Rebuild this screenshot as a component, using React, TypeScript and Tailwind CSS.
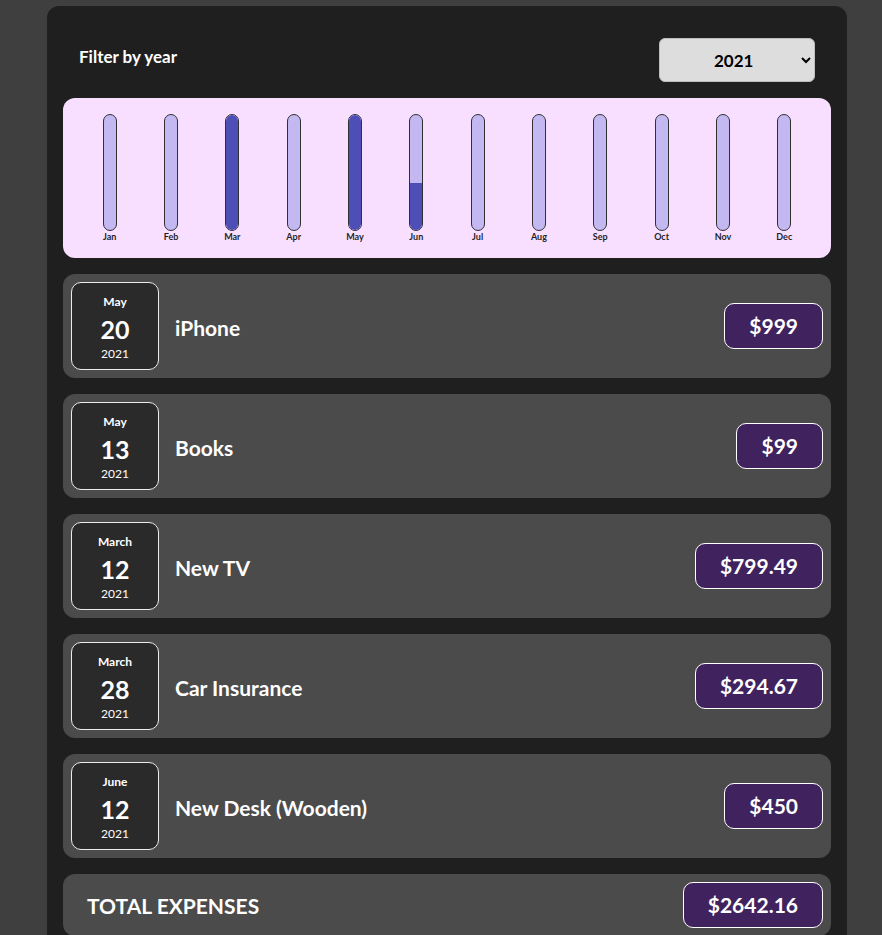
import { useState } from "react";

type Expense = {
  id: string;
  title: string;
  amount: number;
  date: Date;
};

const EXPENSES: Expense[] = [
  { id: "e1", title: "iPhone", amount: 999, date: new Date(2021, 4, 20) },
  { id: "e2", title: "Books", amount: 99, date: new Date(2021, 4, 13) },
  { id: "e3", title: "New TV", amount: 799.49, date: new Date(2021, 2, 12) },
  { id: "e4", title: "Car Insurance", amount: 294.67, date: new Date(2021, 2, 28) },
  { id: "e5", title: "New Desk (Wooden)", amount: 450, date: new Date(2021, 5, 12) },
];

const MONTHS = ["Jan", "Feb", "Mar", "Apr", "May", "Jun", "Jul", "Aug", "Sep", "Oct", "Nov", "Dec"];

function ChartBar({ label, value, max }: { label: string; value: number; max: number }) {
  const fill = max > 0 ? Math.round((value / max) * 100) + "%" : "0%";
  return (
    <div className="flex flex-1 flex-col items-center">
      <div className="flex h-[117px] w-[14px] flex-col justify-end overflow-hidden rounded-full border border-[#313131] bg-[#c3b8f1]">
        <div className="w-full bg-[#4e4fb6]" style={{ height: fill }} />
      </div>
      <span className="text-[9px] font-bold leading-[12px] text-[#1f1f1f]">{label}</span>
    </div>
  );
}

function ExpenseDate({ date }: { date: Date }) {
  const month = date.toLocaleString("en-US", { month: "long" });
  const day = date.toLocaleString("en-US", { day: "2-digit" });
  const year = date.getFullYear();
  return (
    <div className="flex h-[88px] w-[88px] shrink-0 flex-col items-center justify-center rounded-[10px] border border-[#ececec] bg-[#2a2a2a] pt-[4px] text-white">
      <span className="mb-[4px] text-[12px] font-bold leading-[16px]">{month}</span>
      <span className="text-[25px] font-bold leading-[30px]">{day}</span>
      <span className="mt-[2px] text-[12px] leading-[16px]">{year}</span>
    </div>
  );
}

function Price({ amount }: { amount: string }) {
  return (
    <div className="rounded-[10px] border border-white bg-[#40235e] px-[24px] py-[8px] text-[21px] font-bold leading-[28px] text-white">
      ${amount}
    </div>
  );
}

export default function App() {
  const [year, setYear] = useState("2021");
  const filtered = EXPENSES.filter((e) => e.date.getFullYear().toString() === year);

  const monthly = MONTHS.map((_, i) =>
    filtered.filter((e) => e.date.getMonth() === i).reduce((s, e) => s + e.amount, 0)
  );
  const max = Math.max(...monthly);
  const total = filtered.reduce((s, e) => s + e.amount, 0);

  return (
    <div
      className="min-h-[935px] bg-[#3f3f3f] pl-[47px] pt-[6px]"
      style={{ fontFamily: "Lato, 'Noto Sans', sans-serif" }}
    >
      <div className="w-[800px] rounded-t-[12px] bg-[#1f1f1f] px-4 pt-4">
        {/* FILTER */}
        <div className="flex items-center justify-between p-4">
          <label className="mb-[6px] text-[17px] font-bold text-white">Filter by year</label>
          <select
            value={year}
            onChange={(e) => setYear(e.target.value)}
            className="h-[44px] w-[156px] rounded-[6px] border border-[#bdbdbd] bg-[#dddddd] pl-[50px] text-[17px] font-bold text-black"
          >
            <option value="2022">2022</option>
            <option value="2021">2021</option>
            <option value="2020">2020</option>
            <option value="2019">2019</option>
          </select>
        </div>

        {/* CHART */}
        <div className="flex h-[160px] items-start rounded-[12px] bg-[#f8dfff] px-4 pt-4">
          {MONTHS.map((m, i) => (
            <ChartBar key={m} label={m} value={monthly[i]} max={max} />
          ))}
        </div>

        {/* LIST */}
        <ul className="mt-4 flex flex-col gap-4">
          {filtered.map((e) => (
            <li key={e.id} className="flex items-center gap-4 rounded-[12px] bg-[#4b4b4b] p-2">
              <ExpenseDate date={e.date} />
              <h2 className="flex-1 pt-[3px] text-[21px] font-bold text-white">{e.title}</h2>
              <Price amount={e.amount.toString()} />
            </li>
          ))}
          <li className="flex items-center justify-between rounded-[12px] bg-[#4b4b4b] p-2 pl-6">
            <span className="pt-[2px] text-[21px] font-bold uppercase text-white">Total expenses</span>
            <Price amount={total.toFixed(2)} />
          </li>
        </ul>
      </div>
    </div>
  );
}
